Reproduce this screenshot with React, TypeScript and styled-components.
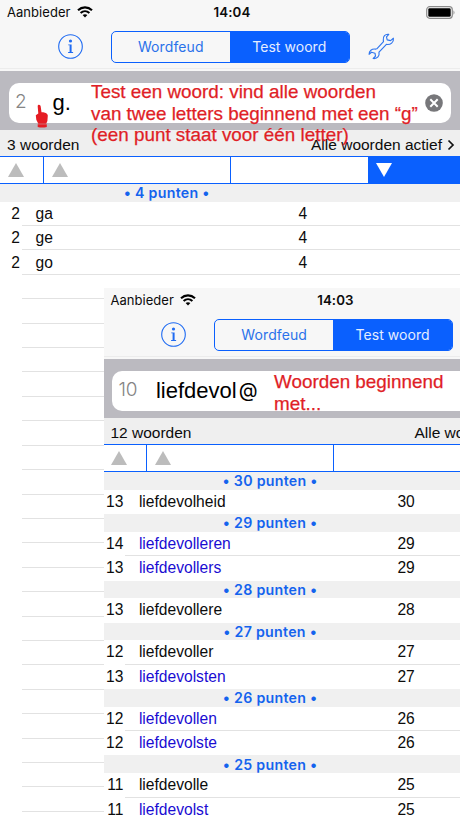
import React from "react";
import styled, { createGlobalStyle } from "styled-components";

const BLUE = "#0a60fe";
const SANS = '"Liberation Sans", Arial, sans-serif';
const UI = 'Inter, "Liberation Sans", sans-serif';

const GlobalStyle = createGlobalStyle`
  * { box-sizing: border-box; }
  html, body { margin: 0; padding: 0; overflow: hidden; background: #fff; }
`;

const Stage = styled.main`
  position: relative;
  width: 460px;
  height: 818px;
  overflow: hidden;
  background: #fff;
  color: #0c0c0c;
  font-family: ${SANS};
`;

const Overlay = styled.div`
  position: absolute;
  left: 104px;
  top: 288px;
  width: 356px;
  height: 530px;
  overflow: hidden;
  background: #fff;
`;

const Screen = styled.section<{ $shift?: boolean }>`
  position: relative;
  width: 460px;
  margin-left: ${(p) => (p.$shift ? "-0.6px" : "0")};
`;

const TopArea = styled.header`
  height: 71px;
  background: #f7f7f7;
`;

const StatusBar = styled.div`
  display: grid;
  grid-template-columns: 1fr auto 1fr;
  align-items: center;
  height: 24px;
  padding: 0 4px 0 7px;
  font-family: ${UI};
  font-size: 13px;
`;

const Carrier = styled.span`
  display: flex;
  align-items: center;
  gap: 6.5px;
  letter-spacing: 0.05px;
`;

const Clock = styled.span`
  font-weight: 600;
  font-size: 13.3px;
  letter-spacing: 0.1px;
  padding-left: 1px;
`;

const BatterySlot = styled.span`
  display: flex;
  justify-content: flex-end;
`;

const Toolbar = styled.nav`
  display: flex;
  align-items: center;
  height: 45px;
  padding: 1px 0 0 57.5px;
  border-bottom: 1px solid #ececec;
`;

const Segments = styled.div`
  display: flex;
  width: 239px;
  height: 32px;
  margin: 0 18px 0 28px;
  border: 1px solid ${BLUE};
  border-radius: 5px;
  overflow: hidden;
`;

const Segment = styled.div<{ $active?: boolean }>`
  flex: 1;
  display: flex;
  align-items: center;
  justify-content: center;
  font-family: ${UI};
  font-size: 14px;
  letter-spacing: ${(p) => (p.$active ? "0.05px" : "0.1px")};
  color: ${(p) => (p.$active ? "#e4edff" : "#2a72ea")};
  background: ${(p) => (p.$active ? BLUE : "transparent")};
`;

const SearchBand = styled.div`
  height: 59px;
  padding: 11.5px 9px 0;
  background: #bbbac0;
`;

const Field = styled.div`
  display: flex;
  align-items: center;
  height: 40px;
  border-radius: 10px;
  background: #fff;
  padding-right: 8.5px;
`;

const Count = styled.span`
  width: 43.5px;
  padding: 0 0 3px 6px;
  font-family: ${UI};
  font-weight: 300;
  font-size: 19px;
  letter-spacing: -0.1px;
  color: #858585;
`;

const Query = styled.span`
  flex: 1;
  font-size: 22px;
  line-height: 26px;
  color: #000;
`;

const AtSign = styled.span`
  display: inline-block;
  font-family: ${UI};
  font-size: 19.5px;
  line-height: 20px;
  margin-left: 2px;
  transform: translateY(-1.5px);
`;

const Summary = styled.div`
  display: flex;
  justify-content: space-between;
  align-items: center;
  height: 26px;
  padding: 3px 5px 0 7px;
  background: #efefef;
  font-size: 15.5px;
`;

const Filter = styled.span`
  display: flex;
  align-items: center;
  gap: 5px;
`;

const Columns = styled.div`
  display: grid;
  grid-template-columns: 44px 187px 136.6px 1fr;
  height: 28px;
  border-top: 1px solid ${BLUE};
  border-bottom: 1px solid ${BLUE};
`;

const Column = styled.div<{ $active?: boolean; $plain?: boolean }>`
  display: flex;
  align-items: center;
  padding-left: 8px;
  background: ${(p) => (p.$active ? BLUE : "#fff")};
  border-right: ${(p) => (p.$plain ? "0" : `1px solid ${BLUE}`)};
`;

const SectionTitle = styled.h2`
  display: flex;
  align-items: center;
  justify-content: center;
  height: 17.65px;
  margin: 0;
  padding-right: 126.5px;
  background: #f0f0f0;
  color: #1463ee;
  font-family: ${UI};
  font-weight: 600;
  font-size: 14.2px;
  letter-spacing: 0.28px;
`;

const Row = styled.div`
  display: grid;
  grid-template-columns: 20px 1fr 153px;
  column-gap: 15.5px;
  align-items: center;
  position: relative;
  height: 24.42px;
  font-size: 15.6px;
  line-height: 20px;
`;

const Divider = styled.span`
  position: absolute;
  left: 22px;
  right: 0;
  bottom: 0;
  height: 1px;
  background: #e2e2e2;
`;

const Length = styled.span`
  text-align: right;
`;

const Word = styled.span<{ $link?: boolean }>`
  color: ${(p) => (p.$link ? "#1a0cd2" : "inherit")};
`;

const Score = styled.span<{ $wide?: boolean }>`
  margin-left: ${(p) => (p.$wide ? "-13px" : "-8.5px")};
`;

const Note = styled.p<{ $x: number; $y: number }>`
  position: absolute;
  left: ${(p) => p.$x}px;
  top: ${(p) => p.$y}px;
  margin: 0;
  color: #e01e26;
  font-size: 18.85px;
  line-height: 21.5px;
  white-space: pre;
  -webkit-text-stroke: 0.25px #e01e26;
`;

const Pointer = styled.svg`
  position: absolute;
  left: 35px;
  top: 104px;
`;

const Wifi = () => (
  <svg width="16" height="12" viewBox="0 0 16 12" fill="none" stroke="#000" strokeWidth="2.1">
    <path d="M1 4.2C5 .4 11 .4 15 4.2" />
    <path d="M3.6 7C6.2 4.6 9.8 4.6 12.4 7" />
    <path d="M8 11.5 5.6 9.1C7 7.8 9 7.8 10.4 9.1Z" fill="#000" stroke="none" />
  </svg>
);

const Battery = () => (
  <svg width="30" height="13" viewBox="0 0 30 13">
    <rect x="0.7" y="0.7" width="25.6" height="11.6" rx="3" fill="#f7f7f7" stroke="#8b8b8b" strokeWidth="1.2" />
    <rect x="2.3" y="2.3" width="22.4" height="8.4" rx="1.3" fill="#000" />
    <path d="M27.5 4.2Q29.5 6.5 27.5 8.8Z" fill="#8b8b8b" />
  </svg>
);

const Info = () => (
  <svg width="25" height="25" viewBox="0 0 25 25">
    <circle cx="12.5" cy="12.5" r="11.8" fill="none" stroke="#1f6bf2" strokeWidth="1.1" />
    <circle cx="12.5" cy="7" r="1.6" fill="#1f6bf2" />
    <path d="M10.2 10.4h3.4v7.6h1.5v.9h-5v-.9h1.5v-6.7h-1.4z" fill="#1f6bf2" />
  </svg>
);

const Wrench = () => (
  <svg width="27" height="27" viewBox="0 0 27 27" fill="none" stroke="#2f76ef" strokeWidth="1.15" strokeLinejoin="round">
    <path d="M20.8 1.3C17.2 .8 14.7 3.5 15.3 7.2L15.5 8.7 8.8 15.8 7.3 16.1C3.9 15.7 1 17.8 1.1 21.3L3.5 19.2 7 20.2 7.5 23.1 5.2 25.5C9.5 26 11.7 23 11 19.2L18.4 11.4C22.5 12.1 26 9.2 25.4 5.2L22.6 7.6 19.2 6.9 18.5 3.8Z" />
  </svg>
);

const Clear = () => (
  <svg width="18" height="18" viewBox="0 0 18 18">
    <circle cx="9" cy="9" r="8.8" fill="#77777a" />
    <path d="M5.3 5.3l7.4 7.4m0-7.4l-7.4 7.4" stroke="#fff" strokeWidth="2" />
  </svg>
);

const Chevron = () => (
  <svg width="8" height="12" viewBox="0 0 8 12" fill="none" stroke="#111" strokeWidth="1.7">
    <path d="M1.5 1.5 6 6 1.5 10.5" />
  </svg>
);

const Arrow = ({ down }: { down?: boolean }) => (
  <svg width="16" height="14" viewBox="0 0 16 14">
    <path d={down ? "M0 0H16L8 14Z" : "M0 14H16L8 0Z"} fill={down ? "#fff" : "#bcbcbc"} />
  </svg>
);

interface Entry { length: number; word: string; link?: boolean }
interface Group { points: number; entries: Entry[] }

const firstGroups: Group[] = [
  { points: 4, entries: [{ length: 2, word: "ga" }, { length: 2, word: "ge" }, { length: 2, word: "go" }] },
];

const secondGroups: Group[] = [
  { points: 30, entries: [{ length: 13, word: "liefdevolheid" }] },
  { points: 29, entries: [{ length: 14, word: "liefdevolleren", link: true }, { length: 13, word: "liefdevollers", link: true }] },
  { points: 28, entries: [{ length: 13, word: "liefdevollere" }] },
  { points: 27, entries: [{ length: 12, word: "liefdevoller" }, { length: 13, word: "liefdevolsten", link: true }] },
  { points: 26, entries: [{ length: 12, word: "liefdevollen", link: true }, { length: 12, word: "liefdevolste", link: true }] },
  { points: 25, entries: [{ length: 11, word: "liefdevolle" }, { length: 11, word: "liefdevolst", link: true }] },
];

interface ScreenProps {
  time: string;
  count: number;
  query: React.ReactNode;
  total: number;
  groups: Group[];
  emptyRows?: number;
  shift?: boolean;
}

const WordScreen = ({ time, count, query, total, groups, emptyRows = 0, shift }: ScreenProps) => (
  <Screen $shift={shift}>
    <TopArea>
      <StatusBar>
        <Carrier>Aanbieder <Wifi /></Carrier>
        <Clock>{time}</Clock>
        <BatterySlot><Battery /></BatterySlot>
      </StatusBar>
      <Toolbar>
        <Info />
        <Segments>
          <Segment>Wordfeud</Segment>
          <Segment $active>Test woord</Segment>
        </Segments>
        <Wrench />
      </Toolbar>
    </TopArea>
    <SearchBand>
      <Field>
        <Count>{count}</Count>
        <Query>{query}</Query>
        <Clear />
      </Field>
    </SearchBand>
    <Summary>
      <span>{total} woorden</span>
      <Filter>Alle woorden actief <Chevron /></Filter>
    </Summary>
    <Columns>
      <Column><Arrow /></Column>
      <Column><Arrow /></Column>
      <Column $plain />
      <Column $plain $active><Arrow down /></Column>
    </Columns>
    {groups.map((group) => (
      <React.Fragment key={group.points}>
        <SectionTitle>• {group.points} punten •</SectionTitle>
        {group.entries.map((entry, i) => (
          <Row key={entry.word}>
            <Length>{entry.length}</Length>
            <Word $link={entry.link}>{entry.word}</Word>
            <Score $wide={group.points > 9}>{group.points}</Score>
            {(emptyRows > 0 || i < group.entries.length - 1) && <Divider />}
          </Row>
        ))}
      </React.Fragment>
    ))}
    {Array.from({ length: emptyRows }, (_, i) => (
      <Row key={i}><Divider /></Row>
    ))}
  </Screen>
);

export default function App() {
  return (
    <>
      <GlobalStyle />
      <Stage>
        <WordScreen time="14:04" count={2} query="g." total={3} groups={firstGroups} emptyRows={22} />
        <Note $x={91} $y={81}>
          {"Test een woord: vind alle woorden\nvan twee letters beginnend met een “g”\n(een punt staat voor één letter)"}
        </Note>
        <Pointer width="14" height="25" viewBox="0 0 14 25" fill="#e51c23">
          <path d="M3.2 1C4.4.4 5.5 1.2 5.7 2.5L6.5 8.3C9 8 12.5 9.2 12.8 11.5L12.4 17 11.2 19.8H3.3L1.3 15.8.8 11.2 3.3 9.6 2.7 2.6Q2.6 1.4 3.2 1Z" />
          <path d="M2.7 20.3H11.8V23Q7 24 2.7 23Z" />
        </Pointer>
        <Overlay>
          <WordScreen
            shift
            time="14:03"
            count={10}
            query={<>liefdevol<AtSign>@</AtSign></>}
            total={12}
            groups={secondGroups}
          />
          <Note $x={170} $y={83}>{"Woorden beginnend\nmet..."}</Note>
        </Overlay>
      </Stage>
    </>
  );
}
